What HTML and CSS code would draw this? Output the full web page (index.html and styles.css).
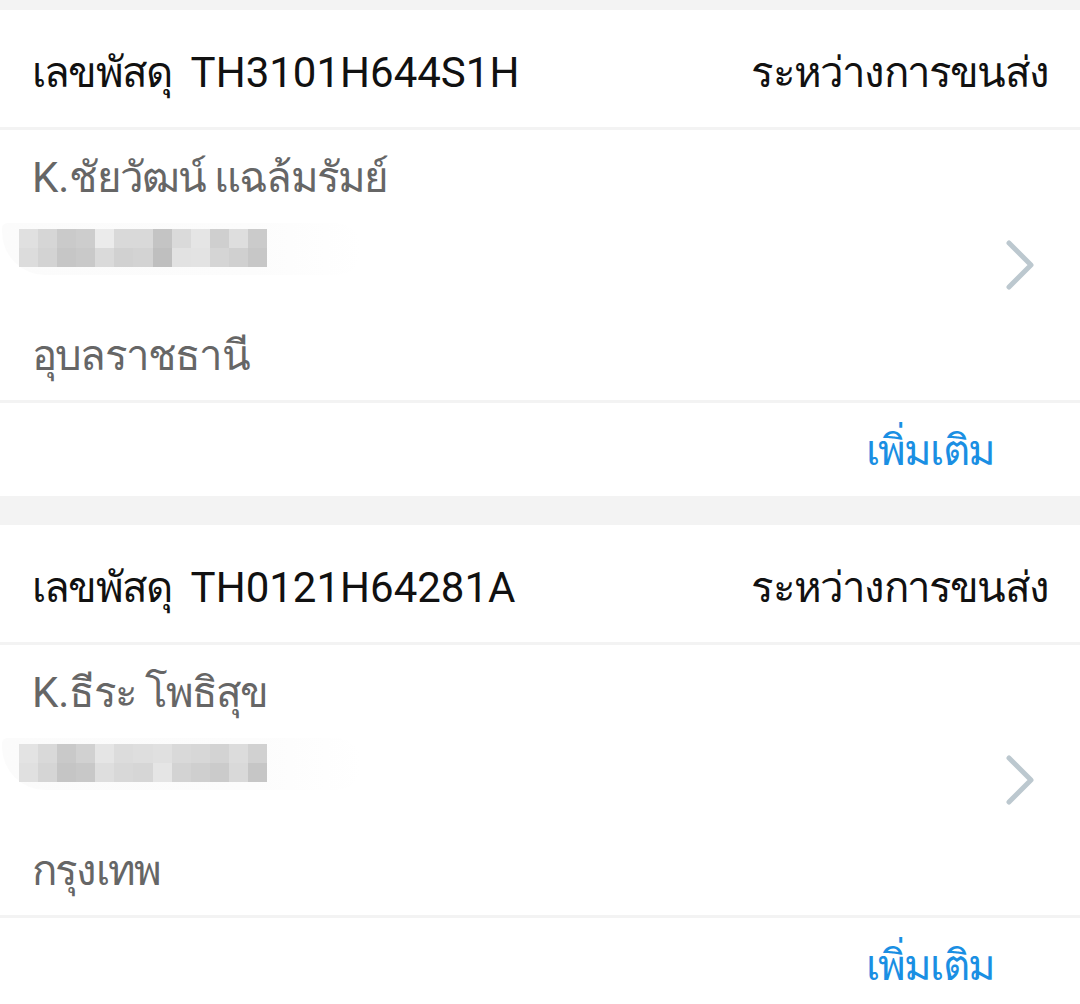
FILE: index.html
```html
<!DOCTYPE html>
<html lang="th">
<head>
<meta charset="utf-8">
<link rel="stylesheet" href="styles.css">
</head>
<body>
<div class="page">
  <section class="card">
    <div class="card-head">
      <span class="parcel"><span class="th label">เลขพัสดุ</span> TH3101H644S1H</span>
      <span class="status th">ระหว่างการขนส่ง</span>
    </div>
    <div class="card-body">
      <div class="info">
        <div class="name">K.<span class="th">ชัยวัฒน์ แฉล้มรัมย์</span></div>
        <div class="mosaic">
          <div class="tiles">
            <i style="background:#e0e0e0"></i><i style="background:#d6d6d6"></i><i style="background:#cacaca"></i><i style="background:#cdcdcd"></i><i style="background:#ebebeb"></i><i style="background:#d9d9d9"></i><i style="background:#d9d9d9"></i><i style="background:#c4c4c4"></i><i style="background:#dadada"></i><i style="background:#e5e5e5"></i><i style="background:#cfcfcf"></i><i style="background:#dedede"></i><i style="background:#cbcbcb"></i>
            <i style="background:#dcdcdc"></i><i style="background:#d3d3d3"></i><i style="background:#c6c6c6"></i><i style="background:#c9c9c9"></i><i style="background:#dadada"></i><i style="background:#d1d1d1"></i><i style="background:#d3d3d3"></i><i style="background:#bfbfbf"></i><i style="background:#e2e2e2"></i><i style="background:#e3e3e3"></i><i style="background:#d5d5d5"></i><i style="background:#d0d0d0"></i><i style="background:#c7c7c7"></i>
          </div>
          <div class="smear"></div>
        </div>
        <div class="city th">อุบลราชธานี</div>
      </div>
      <svg class="chev" width="32" height="52" viewBox="0 0 32 52"><path d="M6 4 L28 26 L6 48" fill="none" stroke="#bcc8cf" stroke-width="5" stroke-linecap="round" stroke-linejoin="round"/></svg>
    </div>
    <div class="card-foot"><span class="more th">เพิ่มเติม</span></div>
  </section>

  <section class="card">
    <div class="card-head">
      <span class="parcel"><span class="th label">เลขพัสดุ</span> TH0121H64281A</span>
      <span class="status th">ระหว่างการขนส่ง</span>
    </div>
    <div class="card-body">
      <div class="info">
        <div class="name">K.<span class="th">ธีระ โพธิสุข</span></div>
        <div class="mosaic">
          <div class="tiles">
            <i style="background:#e3e3e3"></i><i style="background:#d9d9d9"></i><i style="background:#c9c9c9"></i><i style="background:#d1d1d1"></i><i style="background:#e5e5e5"></i><i style="background:#dcdcdc"></i><i style="background:#dedede"></i><i style="background:#e0e0e0"></i><i style="background:#d9d9d9"></i><i style="background:#d7d7d7"></i><i style="background:#d3d3d3"></i><i style="background:#dcdcdc"></i><i style="background:#d1d1d1"></i>
            <i style="background:#e0e0e0"></i><i style="background:#d5d5d5"></i><i style="background:#c5c5c5"></i><i style="background:#c8c8c8"></i><i style="background:#dedede"></i><i style="background:#d8d8d8"></i><i style="background:#d6d6d6"></i><i style="background:#e5e5e5"></i><i style="background:#d3d3d3"></i><i style="background:#cfcfcf"></i><i style="background:#cbcbcb"></i><i style="background:#d9d9d9"></i><i style="background:#c6c6c6"></i>
          </div>
          <div class="smear"></div>
        </div>
        <div class="city th">กรุงเทพ</div>
      </div>
      <svg class="chev" width="32" height="52" viewBox="0 0 32 52"><path d="M6 4 L28 26 L6 48" fill="none" stroke="#bcc8cf" stroke-width="5" stroke-linecap="round" stroke-linejoin="round"/></svg>
    </div>
    <div class="card-foot"><span class="more th">เพิ่มเติม</span></div>
  </section>
</div>
</body>
</html>
```

FILE: styles.css
```css
html, body {
  margin: 0;
  padding: 0;
}
body {
  background: #f3f3f3;
  font-family: Roboto, "Noto Sans", "DejaVu Sans", sans-serif;
  font-size: 42px;
  overflow: hidden;
}
.page {
  padding-top: 10px;
}
.card {
  background: #ffffff;
  margin-bottom: 29px;
}
.th {
  letter-spacing: -1.8px;
}
.card-head {
  height: 120px;
  box-sizing: border-box;
  padding: 33px 32px 0;
  display: flex;
  justify-content: space-between;
  align-items: flex-start;
  color: #111111;
  line-height: 60px;
  border-bottom: 3px solid #f3f3f3;
}
.card-head span {
  white-space: nowrap;
}
.label {
  margin-right: 9px;
}
.card-body {
  height: 273px;
  box-sizing: border-box;
  display: flex;
  align-items: center;
  padding: 0 45px 0 0;
  border-bottom: 3px solid #f3f3f3;
}
.info {
  flex: 1;
  align-self: stretch;
  display: flex;
  flex-direction: column;
  padding-top: 18px;
}
.name, .city {
  color: #666666;
  line-height: 60px;
  padding-left: 32px;
  white-space: nowrap;
}
.mosaic {
  position: relative;
  margin-top: 21px;
  height: 38px;
  width: 360px;
}
.tiles {
  position: relative;
  z-index: 1;
  margin-left: 19px;
  width: 248px;
  height: 38px;
  display: grid;
  grid-template-columns: repeat(13, 1fr);
  grid-template-rows: repeat(2, 1fr);
}
.tiles i {
  display: block;
}
.smear {
  position: absolute;
  left: 2px;
  top: -6px;
  width: 360px;
  height: 52px;
  background: linear-gradient(90deg, #fbfbfb 0%, #fcfcfc 70%, rgba(252,252,252,0) 100%);
  border-radius: 6px 30px 30px 50px;
}
.city {
  margin-top: 59px;
}
.chev {
  flex: none;
  display: block;
}
.card-foot {
  height: 93px;
  box-sizing: border-box;
  display: flex;
  justify-content: flex-end;
  align-items: center;
  padding-right: 86px;
  padding-top: 3px;
}
.more {
  color: #1a8fe3;
  line-height: 60px;
  white-space: nowrap;
}
```
